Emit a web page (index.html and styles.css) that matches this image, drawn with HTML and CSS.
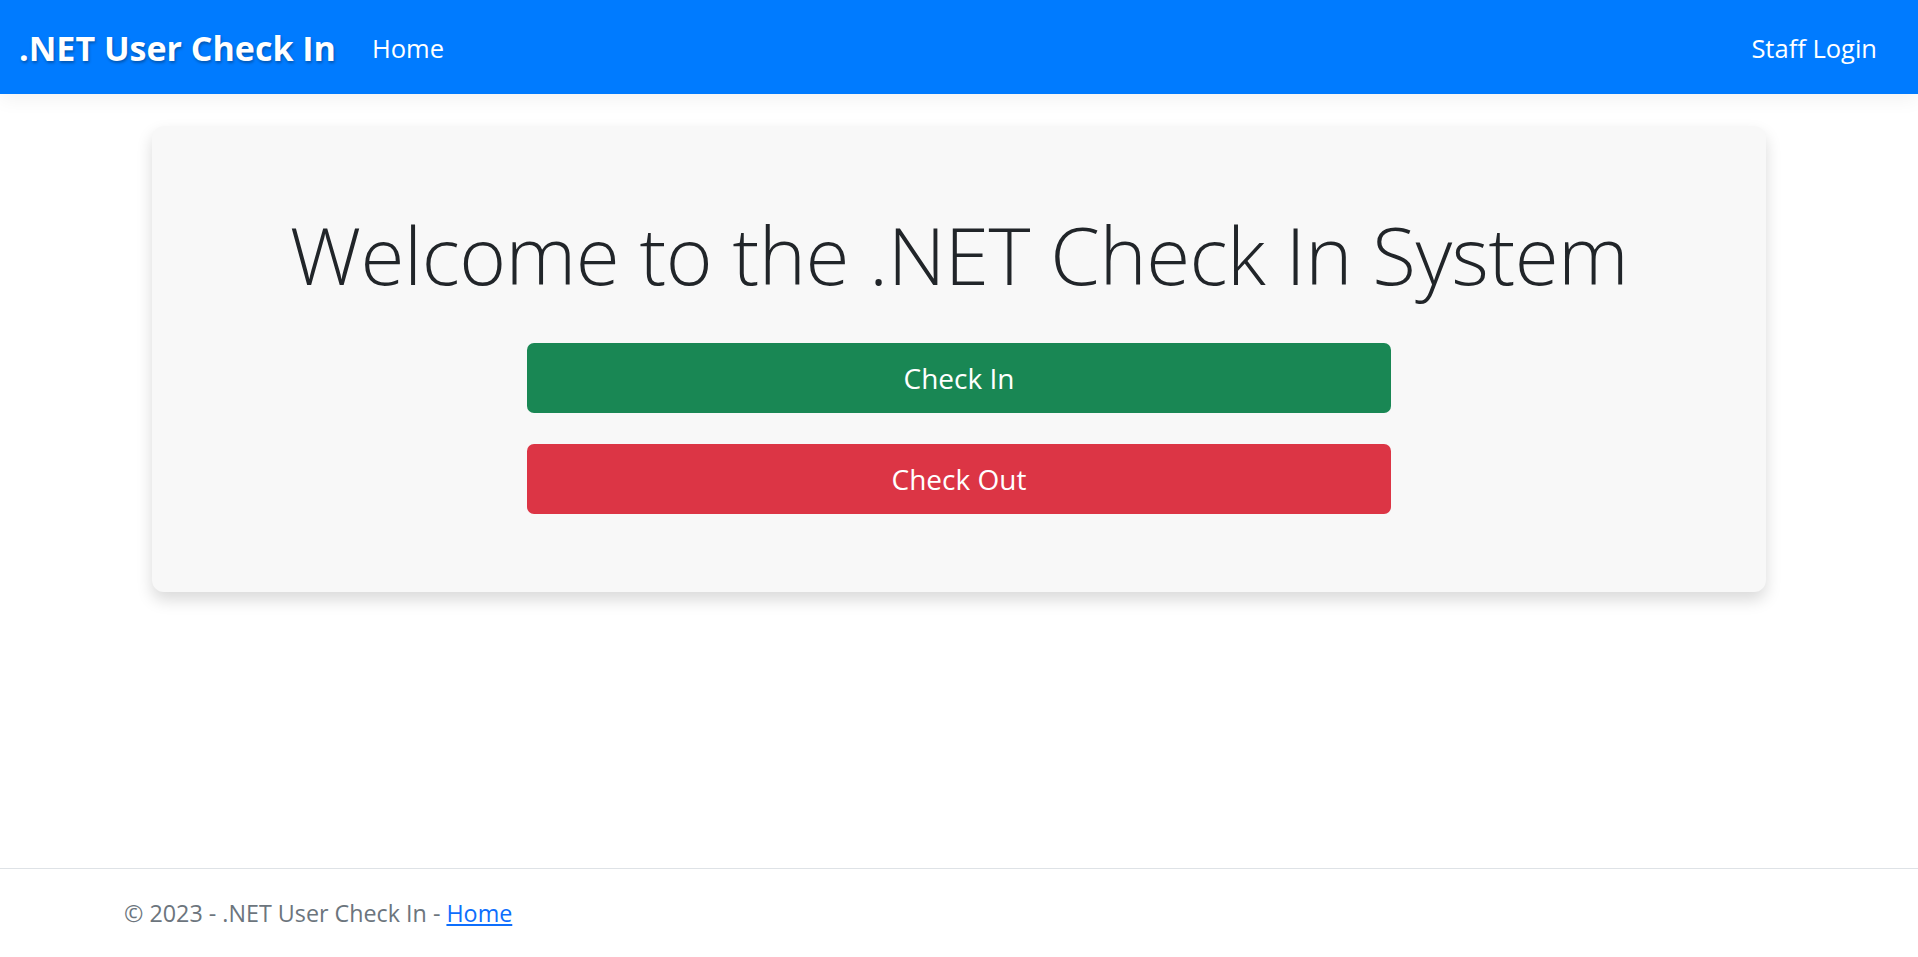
FILE: index.html
```html
<!DOCTYPE html>
<html lang="en">
<head>
<meta charset="utf-8">
<title>.NET User Check In</title>
<link rel="stylesheet" href="styles.css">
</head>
<body>
  <header class="navbar">
    <a class="brand" href="#">.NET User Check In</a>
    <nav class="nav-left"><a class="nav-link" href="#">Home</a></nav>
    <nav class="nav-right"><a class="nav-link" href="#">Staff Login</a></nav>
  </header>
  <main class="main">
    <section class="card">
      <h1 class="display">Welcome to the .NET Check In System</h1>
      <div class="actions">
        <a class="btn btn-success" href="#">Check In</a>
        <a class="btn btn-danger" href="#">Check Out</a>
      </div>
    </section>
  </main>
  <footer class="footer">
    <div class="footer-inner">&copy; 2023 - .NET User Check In - <a href="#" class="footer-link">Home</a></div>
  </footer>
</body>
</html>
```
FILE: styles.css
```css
* { box-sizing: border-box; }
html, body { height: 100%; }
body {
  margin: 0;
  font-family: "Open Sans", "Noto Sans", sans-serif;
  color: #212529;
  background: #fff;
  display: flex;
  flex-direction: column;
  min-height: 100vh;
}
a { text-decoration: none; }

.navbar {
  height: 94px;
  flex: none;
  background: #007bff;
  display: flex;
  align-items: center;
  padding: 2px 41px 0 19px;
  box-shadow: 0 6px 18px rgba(0,0,0,0.05);
  position: relative;
  z-index: 1;
}
.brand {
  color: #fff;
  font-weight: 700;
  font-size: 34px;
  text-shadow: 1px 2px 3px rgba(0,0,0,0.3);
  margin-right: 36px;
}
.nav-left { flex: 1; }
.nav-link {
  color: #fff;
  font-size: 25.5px;
}

.main {
  flex: 1;
  padding-top: 32px;
}
.card {
  width: 1614px;
  margin: 0 auto;
  background: #f8f8f8;
  border-radius: 12px;
  box-shadow: 0 8px 16px rgba(0,0,0,0.15);
  padding: 80px 0 78px;
  text-align: center;
}
.display {
  margin: 0;
  font-size: 80px;
  font-weight: 300;
  line-height: 1.2;
  letter-spacing: -0.5px;
}
.actions {
  width: 864px;
  margin: 41px auto 0;
  display: flex;
  flex-direction: column;
  gap: 31px;
}
.btn {
  height: 70px;
  display: flex;
  align-items: center;
  justify-content: center;
  color: #fff;
  font-size: 28px;
  border-radius: 7px;
}
.btn-success { background: #198754; }
.btn-danger { background: #dc3545; }

.footer {
  flex: none;
  border-top: 1px solid #dee2e6;
  height: 89px;
  color: #6c757d;
  font-size: 23.3px;
}
.footer-inner {
  line-height: 88px;
  padding-left: 124px;
  white-space: nowrap;
}
.footer-link {
  color: #0d6efd;
  text-decoration: underline;
}
```
